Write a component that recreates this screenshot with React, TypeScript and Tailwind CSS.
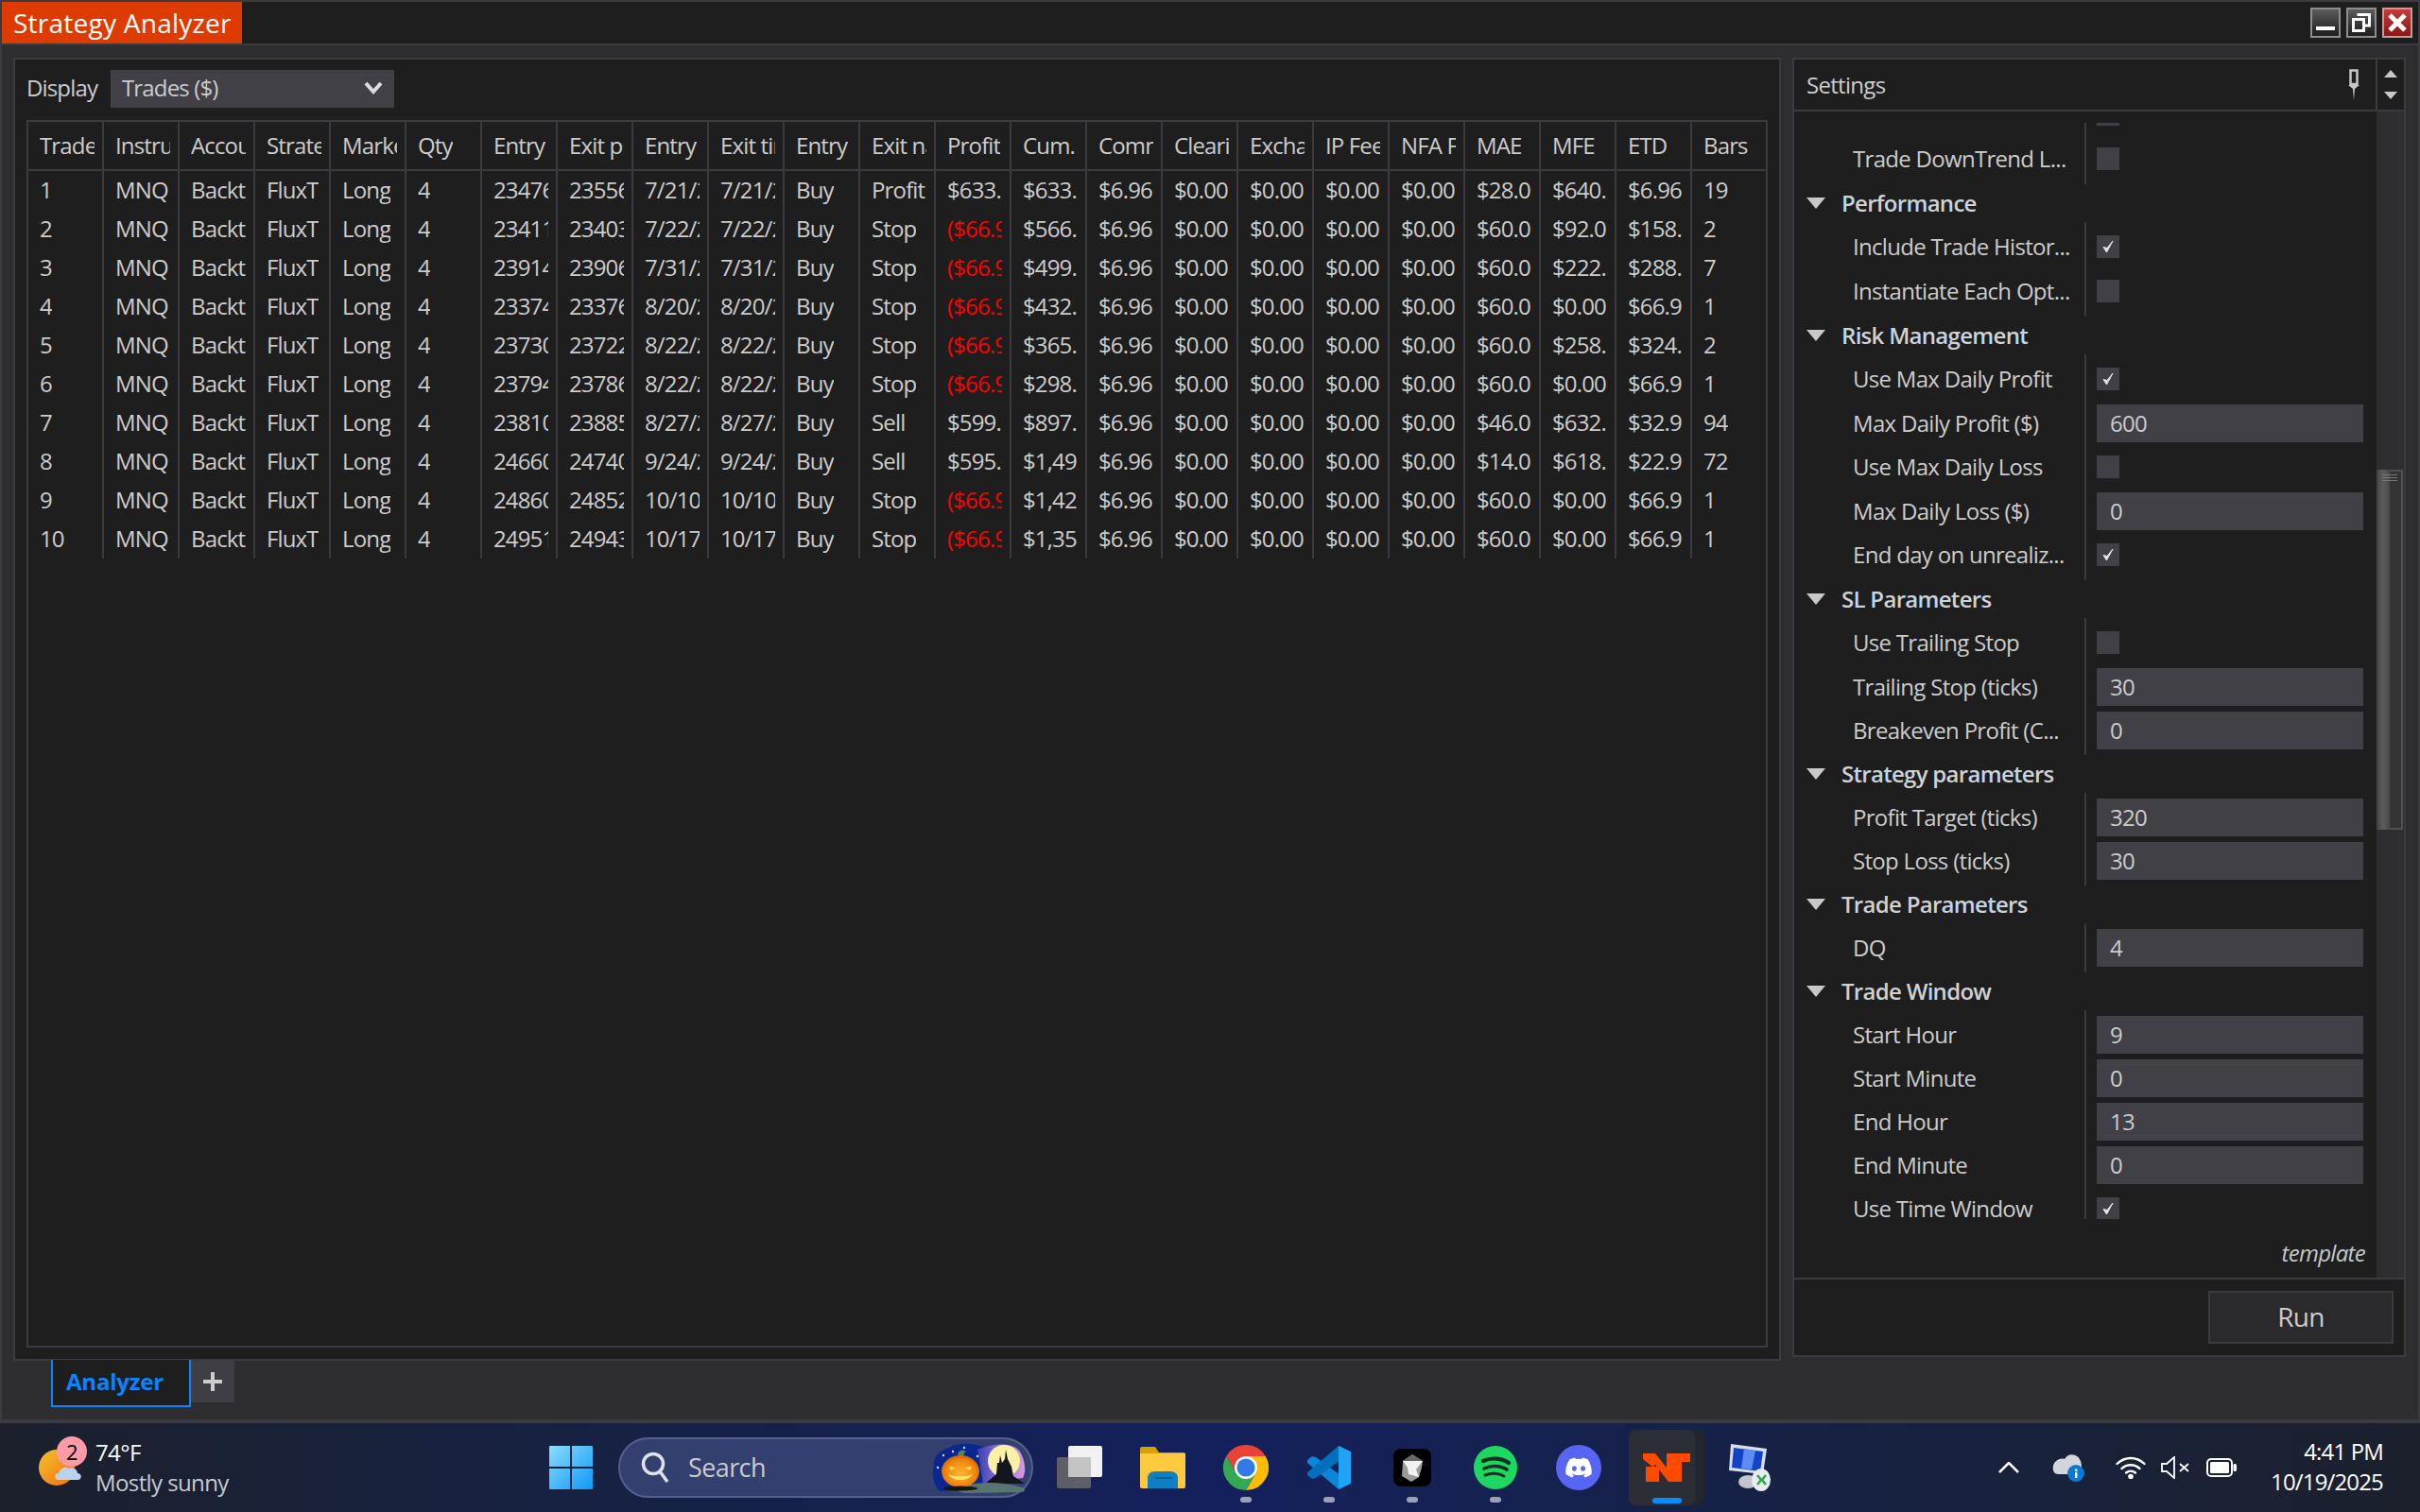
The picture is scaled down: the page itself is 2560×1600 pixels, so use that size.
import { FaDiscord } from 'react-icons/fa6'

const columns = [
  'Trade', 'Instrument', 'Account', 'Strategy', 'Market pos.', 'Qty', 'Entry price', 'Exit price',
  'Entry time', 'Exit time', 'Entry name', 'Exit name', 'Profit', 'Cum. net profit', 'Commission',
  'Clearing Fee', 'Exchange Fee', 'IP Fee', 'NFA Fee', 'MAE', 'MFE', 'ETD', 'Bars',
]

const trades: Array<Array<string>> = [
  ['1', '23476.50', '23556.50', '7/21/2025', '7/21/2025', 'Profit target', '$633.04', '$633.04', '$28.00', '$640.00', '$6.96', '19'],
  ['2', '23411.25', '23403.75', '7/22/2025', '7/22/2025', 'Stop', '($66.96)', '$566.08', '$60.00', '$92.00', '$158.96', '2'],
  ['3', '23914.00', '23906.50', '7/31/2025', '7/31/2025', 'Stop', '($66.96)', '$499.12', '$60.00', '$222.00', '$288.96', '7'],
  ['4', '23374.00', '23376.50', '8/20/2025', '8/20/2025', 'Stop', '($66.96)', '$432.16', '$60.00', '$0.00', '$66.96', '1'],
  ['5', '23730.00', '23722.50', '8/22/2025', '8/22/2025', 'Stop', '($66.96)', '$365.20', '$60.00', '$258.00', '$324.96', '2'],
  ['6', '23794.00', '23786.50', '8/22/2025', '8/22/2025', 'Stop', '($66.96)', '$298.24', '$60.00', '$0.00', '$66.96', '1'],
  ['7', '23810.50', '23885.50', '8/27/2025', '8/27/2025', 'Sell', '$599.04', '$897.28', '$46.00', '$632.00', '$32.96', '94'],
  ['8', '24660.00', '24740.00', '9/24/2025', '9/24/2025', 'Sell', '$595.04', '$1,492.32', '$14.00', '$618.00', '$22.96', '72'],
  ['9', '24860.00', '24852.50', '10/10/2025', '10/10/2025', 'Stop', '($66.96)', '$1,425.36', '$60.00', '$0.00', '$66.96', '1'],
  ['10', '24951.25', '24943.75', '10/17/2025', '10/17/2025', 'Stop', '($66.96)', '$1,358.40', '$60.00', '$0.00', '$66.96', '1'],
]

function tradeCells(t: string[]) {
  return [
    t[0], 'MNQ 12-25', 'Backtest', 'FluxT', 'Long', '4', t[1], t[2], t[3], t[4], 'Buy', t[5], t[6], t[7],
    '$6.96', '$0.00', '$0.00', '$0.00', '$0.00', t[8], t[9], t[10], t[11],
  ]
}

type SettingRow = { label: string; value?: string; check?: boolean }
type SettingGroup = { name?: string; rows: SettingRow[] }

const settingGroups: SettingGroup[] = [
  { rows: [{ label: '', check: false }, { label: 'Trade DownTrend L...', check: false }] },
  {
    name: 'Performance',
    rows: [
      { label: 'Include Trade Histor...', check: true },
      { label: 'Instantiate Each Opt...', check: false },
    ],
  },
  {
    name: 'Risk Management',
    rows: [
      { label: 'Use Max Daily Profit', check: true },
      { label: 'Max Daily Profit ($)', value: '600' },
      { label: 'Use Max Daily Loss', check: false },
      { label: 'Max Daily Loss ($)', value: '0' },
      { label: 'End day on unrealiz...', check: true },
    ],
  },
  {
    name: 'SL Parameters',
    rows: [
      { label: 'Use Trailing Stop', check: false },
      { label: 'Trailing Stop (ticks)', value: '30' },
      { label: 'Breakeven Profit (C...', value: '0' },
    ],
  },
  {
    name: 'Strategy parameters',
    rows: [
      { label: 'Profit Target (ticks)', value: '320' },
      { label: 'Stop Loss (ticks)', value: '30' },
    ],
  },
  { name: 'Trade Parameters', rows: [{ label: 'DQ', value: '4' }] },
  {
    name: 'Trade Window',
    rows: [
      { label: 'Start Hour', value: '9' },
      { label: 'Start Minute', value: '0' },
      { label: 'End Hour', value: '13' },
      { label: 'End Minute', value: '0' },
      { label: 'Use Time Window', check: true },
    ],
  },
]

function rowHeight(row: SettingRow) {
  return row.value !== undefined ? 'h-[46px] pb-px' : 'h-[47px] pb-px'
}

function SettingValue({ row }: { row: SettingRow }) {
  if (row.value !== undefined) {
    return (
      <div className="flex h-[46px] items-center">
        <div className="flex h-10 w-[282px] items-center bg-[#404046] pl-3.5">{row.value}</div>
      </div>
    )
  }
  return (
    <div className="flex h-[47px] items-center pb-px">
      <div className="flex h-6 w-6 items-center justify-center bg-[#404046]">
        {row.check ? (
          <svg width="14" height="16" viewBox="0 0 14 16">
            <path d="M2 8.5 L5.5 14 L12 2 L6 9.5 Z" fill="#e4e4e4" stroke="#e4e4e4" strokeWidth="1" />
          </svg>
        ) : null}
      </div>
    </div>
  )
}

function SettingsGrid() {
  return (
    <div className="-mt-[35px]">
      {settingGroups.map((group, i) => (
        <div key={i}>
          {group.name ? (
            <div className="flex h-10 items-center pb-px pl-[13px] font-semibold text-[#cdd2d8]">
              <svg width="20" height="12" viewBox="0 0 20 12" className="mr-[17px]">
                <polygon points="0,0 20,0 10,12" fill="#c8c8c8" />
              </svg>
              {group.name}
            </div>
          ) : null}
          <div className="flex">
            <div className="w-[309px] border-r-2 border-[#3a3a40] py-[3px] pl-[62px]">
              {group.rows.map((row, j) => (
                <div key={j} className={`flex items-center whitespace-nowrap ${rowHeight(row)}`}>
                  {row.label}
                </div>
              ))}
            </div>
            <div className="py-[3px] pl-[11px]">
              {group.rows.map((row, j) => (
                <SettingValue key={j} row={row} />
              ))}
            </div>
          </div>
        </div>
      ))}
    </div>
  )
}

function TradesGrid() {
  return (
    <div className="ml-3 mt-[13px] h-[1299px] w-[1842px] border-2 border-[#3a3a40]">
      <div className="grid grid-cols-[repeat(22,80px)_78px] border-b-2 border-[#3a3a40]">
        {columns.map((col, i) => (
          <div key={col} className={`flex h-[50px] items-center ${i < 22 ? 'border-r-2 border-[#3a3a40]' : ''}`}>
            <div className="ml-3 mr-2 overflow-hidden whitespace-nowrap">{col}</div>
          </div>
        ))}
      </div>
      {trades.map((trade) => (
        <div key={trade[0]} className="grid grid-cols-[repeat(22,80px)_78px]">
          {tradeCells(trade).map((cell, i) => (
            <div key={i} className={`flex h-[41px] items-center pb-[2px] ${i < 22 ? 'border-r-2 border-[#3a3a40]' : ''}`}>
              <div className={`ml-3 mr-2 overflow-hidden whitespace-nowrap ${cell.startsWith('(') ? 'text-[#ff0000]' : ''}`}>
                {cell}
              </div>
            </div>
          ))}
        </div>
      ))}
    </div>
  )
}

function WindowButton({ close, children }: { close?: boolean; children: React.ReactNode }) {
  return (
    <div
      className={`flex h-8 w-8 items-center justify-center border-2 ${
        close
          ? 'border-[#c99] bg-gradient-to-b from-[#c83a3a] to-[#8e1414]'
          : 'border-[#8e8e8e] bg-gradient-to-b from-[#5c5c5c] to-[#1e1e1e]'
      }`}
    >
      {children}
    </div>
  )
}

function Doodle() {
  return (
    <svg width="105" height="55" viewBox="0 0 105 55">
      <defs>
        <linearGradient id="dusk" x1="0" x2="1" y1="0" y2="0">
          <stop offset="0" stopColor="#3a3fb0" />
          <stop offset="0.6" stopColor="#a583e0" />
          <stop offset="1" stopColor="#d59ae0" />
        </linearGradient>
        <radialGradient id="pump" cx="0.5" cy="0.55" r="0.6">
          <stop offset="0" stopColor="#ffb52e" />
          <stop offset="0.7" stopColor="#f0820c" />
          <stop offset="1" stopColor="#b85a05" />
        </radialGradient>
      </defs>
      <path d="M4 22 C6 10 16 8 24 4 C34 0 50 2 58 6 L58 50 L10 52 C2 44 2 32 4 22 Z" fill="#0a2790" />
      <path d="M50 8 C62 2 90 -2 96 12 C100 20 102 30 98 38 L56 44 Z" fill="url(#dusk)" />
      <circle cx="78" cy="20" r="17" fill="#fbf0a4" />
      <polygon points="58,44 70,34 71,22 73,22 74,14 76,22 79,18 80,8 82,18 86,26 88,36 100,44" fill="#15151f" />
      <path d="M30 50 C40 42 70 40 98 48 C102 50 100 54 92 53 L40 54 C32 54 28 52 30 50 Z" fill="#57766f" />
      <circle cx="14" cy="14" r="1.2" fill="#cfe0ff" />
      <circle cx="24" cy="10" r="1.2" fill="#cfe0ff" />
      <circle cx="36" cy="6" r="1.2" fill="#cfe0ff" />
      <circle cx="50" cy="15" r="1.2" fill="#cfe0ff" />
      <circle cx="8" cy="27" r="1.2" fill="#cfe0ff" />
      <path d="M30 16 C28 10 32 8 36 9 L38 11 C35 11 35 14 36 17 Z" fill="#4f8a5a" />
      <ellipse cx="32" cy="31" rx="20" ry="17" fill="url(#pump)" />
      <path d="M20 26 L27 27 L22 30 Z M44 26 L37 27 L42 30 Z" fill="#ffe46a" />
      <path d="M19 34 C24 42 40 42 45 34 C40 37 24 37 19 34 Z" fill="#ffe46a" />
      <ellipse cx="32" cy="49" rx="18" ry="2.5" fill="#16160f" />
    </svg>
  )
}

function TaskSlot({ children, dot, width = 'w-[88px]' }: { children: React.ReactNode; dot?: boolean; width?: string }) {
  return (
    <div className={`relative flex h-[94px] items-center justify-center ${width}`}>
      {children}
      {dot ? <div className="absolute bottom-[10px] h-1.5 w-3 rounded-full bg-[#9aa0b8]" /> : null}
    </div>
  )
}

export default function App() {
  return (
    <div className="flex h-[1600px] w-[2560px] flex-col overflow-hidden bg-[#2e2e30] font-['Open_Sans',sans-serif] text-[24px] leading-[32px] tracking-[-0.85px] text-[#cccccc]">
      <div className="flex h-[1506px] flex-col border-x-2 border-b-4 border-t-2 border-[#3a3a40]">
        <div className="flex h-[46px] shrink-0 items-center justify-between border-b-2 border-[#3a3a40] bg-[#1e1e1e] pr-1.5">
          <div className="flex h-11 w-[254px] items-center bg-[#de3b00] pl-3 text-[28px] tracking-[0.25px] text-white">Strategy Analyzer</div>
          <div className="flex gap-1.5">
            <WindowButton>
              <div className="mt-3 h-1 w-5 bg-white" />
            </WindowButton>
            <WindowButton>
              <svg width="20" height="20" viewBox="0 0 20 20" fill="none" stroke="#fff" strokeWidth="3">
                <rect x="1.5" y="6.5" width="11" height="12" />
                <path d="M7 3 V1.5 H18.5 V13 H14" />
              </svg>
            </WindowButton>
            <WindowButton close>
              <svg width="20" height="20" viewBox="0 0 20 20" stroke="#fff" strokeWidth="5">
                <path d="M2 2 L18 18 M18 2 L2 18" />
              </svg>
            </WindowButton>
          </div>
        </div>

        <div className="flex items-start gap-3 pl-3 pt-[13px]">
          <div className="h-[1379px] w-[1870px] border-2 border-[#3a3a40] bg-[#1e1e1e]">
            <div className="flex items-center pl-3 pt-[11px]">
              <span className="w-[89px] pb-[2px]">Display</span>
              <div className="flex h-10 w-[300px] items-center justify-between bg-[#404046] pb-[2px] pl-3 pr-3">
                Trades ($)
                <svg width="20" height="14" viewBox="0 0 20 14" fill="none" stroke="#dddddd" strokeWidth="4">
                  <path d="M2 2 L10 11 L18 2" />
                </svg>
              </div>
            </div>
            <TradesGrid />
          </div>

          <div className="h-[1375px] w-[649px] border-2 border-[#3a3a40] bg-[#1e1e1e] tracking-[-0.7px]">
            <div className="flex h-[55px] border-b-2 border-[#3a3a40]">
              <div className="flex flex-1 items-center justify-between border-r-2 border-[#3a3a40] pl-[13px] pr-4">
                <span>Settings</span>
                <svg width="14" height="34" viewBox="0 0 14 34" fill="none">
                  <path d="M3.5 1.5 H10.5 V16 H3.5 Z" stroke="#c8c8c8" strokeWidth="2.5" />
                  <path d="M1 17 H13 L8 21 L7 33 L6 21 Z" fill="#c8c8c8" />
                </svg>
              </div>
              <div className="flex w-[28px] flex-col items-center justify-between py-[11px]">
                <svg width="14" height="8" viewBox="0 0 14 8"><polygon points="7,0 14,8 0,8" fill="#c8c8c8" /></svg>
                <svg width="14" height="8" viewBox="0 0 14 8"><polygon points="0,0 14,0 7,8" fill="#c8c8c8" /></svg>
              </div>
            </div>
            <div className="flex h-[1234px]">
              <div className="w-[616px] pt-3">
                <div className="h-[1160px] overflow-hidden">
                  <SettingsGrid />
                </div>
                <div className="pr-3 pt-5 text-right italic text-[#c4c8cc]">template</div>
              </div>
              <div className="flex-1 bg-[#2e2e30] pt-[379px]">
                <div className="relative flex h-[381px] w-[28px]">
                  <div className="w-[14px] bg-gradient-to-r from-[#444444] via-[#5c5c5c] to-[#484848]" />
                  <div className="w-[14px] border-y-2 border-r-2 border-[#505056] bg-[#333335]" />
                  <div className="absolute left-1.5 top-[5px] flex w-4 flex-col gap-[2px]">
                    <div className="h-px bg-[#77777c]" />
                    <div className="h-px bg-[#77777c]" />
                    <div className="h-px bg-[#77777c]" />
                  </div>
                </div>
              </div>
            </div>
            <div className="flex h-[82px] justify-end border-t-2 border-[#3a3a40] pr-[11px] pt-3">
              <div className="flex h-14 w-[196px] items-center justify-center border-2 border-[#3a3a40] bg-[#2a2a2c] pb-[2px] text-[28px]">Run</div>
            </div>
          </div>
        </div>

        <div className="flex items-start pl-[52px]">
          <div className="-mt-px flex h-[50px] w-[148px] items-center border-x-2 border-b-2 border-[#0a84ff] bg-[#1e1e1e] pb-[3px] pl-3.5 font-bold tracking-[-0.2px] text-[#0a84ff]">Analyzer</div>
          <div className="flex h-11 w-[46px] items-center justify-center bg-[#3e3e44]">
            <svg width="22" height="22" viewBox="0 0 22 22" stroke="#cccccc" strokeWidth="4"><path d="M11 1 V21 M1 11 H21" /></svg>
          </div>
        </div>
      </div>

      <div className="flex h-[94px] items-center bg-gradient-to-r from-[#1b202c] via-[#14205c] to-[#1b202c] tracking-[-0.6px] text-[#c8cad2]">
        <div className="flex w-[581px] items-center pl-[41px]">
          <div className="relative mr-[22px] h-[38px] w-[38px] rounded-full bg-gradient-to-br from-[#f2c12e] to-[#f06c10]">
            <div className="absolute -top-[14px] left-[19px] flex h-8 w-8 items-center justify-center rounded-full bg-[#ff9aa8] text-[22px] text-black">2</div>
            <svg className="absolute left-4 top-[17px]" width="30" height="16" viewBox="0 0 30 16">
              <path d="M5 15 C0 15 0 8 5 8 C6 3 12 0 16 3 C20 1 25 4 25 8 C30 8 30 15 25 15 Z" fill="#b9d3ee" />
            </svg>
          </div>
          <div className="leading-[32px]">
            <div className="text-white">74°F</div>
            <div>Mostly sunny</div>
          </div>
        </div>
        <svg width="46" height="46" viewBox="0 0 46 46">
          <defs>
            <linearGradient id="win" x1="0" y1="0" x2="1" y2="1">
              <stop offset="0" stopColor="#8bdcfc" />
              <stop offset="1" stopColor="#1098f7" />
            </linearGradient>
          </defs>
          <path d="M0 1 Q0 0 1 0 H22 V22 H0 Z M24 0 H45 Q46 0 46 1 V22 H24 Z M0 24 H22 V46 H1 Q0 46 0 45 Z M24 24 H46 V45 Q46 46 45 46 H24 Z" fill="url(#win)" />
        </svg>
        <div className="ml-[27px] flex h-16 w-[439px] items-center rounded-full border-2 border-[#565f8e] bg-[#333f6e] pl-[22px] pr-[2px]">
          <svg width="30" height="34" viewBox="0 0 30 34" fill="none" stroke="#dfe2ea" strokeWidth="3.5">
            <circle cx="13" cy="13" r="10.5" />
            <path d="M20 21 L28 32" />
          </svg>
          <span className="ml-[20px] text-[27px]">Search</span>
          <div className="ml-auto flex">
            <Doodle />
          </div>
        </div>

        <div className="ml-[5px] flex">
          <TaskSlot>
            <svg width="48" height="46" viewBox="0 0 48 46">
              <rect x="12" y="0" width="36" height="33" rx="2" fill="#f2f2f2" />
              <rect x="0" y="12" width="36" height="33" rx="2" fill="#6a6a6a" fillOpacity="0.85" />
              <rect x="12" y="12" width="24" height="21" fill="#c4c4c4" />
            </svg>
          </TaskSlot>
          <TaskSlot>
            <svg width="48" height="44" viewBox="0 0 48 44">
              <path d="M0 2 Q0 0 2 0 H16 L20 6 H46 Q48 6 48 8 V14 H0 Z" fill="#d8a000" />
              <path d="M0 7 H48 V42 Q48 44 46 44 H2 Q0 44 0 42 Z" fill="#fdc93f" />
              <path d="M8 44 V34 Q8 26 16 26 H32 Q40 26 40 34 V44 Z" fill="#0f7fc4" />
              <rect x="16" y="32" width="18" height="2" fill="#0b5f99" />
            </svg>
          </TaskSlot>
          <TaskSlot dot>
            <svg width="48" height="48" viewBox="0 0 48 48">
              <path d="M3.2 12 A24 24 0 0 1 44.8 12 L24 12 L13.6 30 Z" fill="#ea4335" />
              <path d="M44.8 12 A24 24 0 0 1 24 48 L34.4 30 L24 12 Z" fill="#fbbc04" />
              <path d="M24 48 A24 24 0 0 1 3.2 12 L13.6 30 L34.4 30 Z" fill="#34a853" />
              <circle cx="24" cy="24" r="12" fill="#fff" />
              <circle cx="24" cy="24" r="9.6" fill="#2f7be8" />
            </svg>
          </TaskSlot>
          <TaskSlot dot>
            <svg width="48" height="48" viewBox="0 0 48 48">
              <polygon points="34,47 40,44 40,35 10,13 6,12 1,16 1,19" fill="#0d86d8" />
              <polygon points="34,1 40,4 40,13 10,35 6,36 1,32 1,29" fill="#0070bd" />
              <polygon points="34,1 47,7 47,41 34,47 34,1" fill="#1fa3f5" />
            </svg>
          </TaskSlot>
          <TaskSlot dot>
            <svg width="40" height="40" viewBox="0 0 40 40">
              <rect width="40" height="40" rx="8" fill="#000" />
              <polygon points="20,6 31,13 30,20 27,30 19,35 9,29 10,13" fill="#9a9a9a" />
              <polygon points="10,13 31,13 24,22 27,30 16,27 15,20" fill="#f2f2f2" />
              <polygon points="20,6 31,13 10,13" fill="#686868" />
            </svg>
          </TaskSlot>
          <TaskSlot dot>
            <svg width="46" height="46" viewBox="0 0 46 46" fill="none" strokeLinecap="round">
              <circle cx="23" cy="23" r="23" fill="#1ed760" />
              <path d="M10 16 C18 12 30 13 37 18" stroke="#14301f" strokeWidth="4.2" />
              <path d="M11 24 C19 20 29 21 35 25" stroke="#14301f" strokeWidth="3.6" />
              <path d="M12 31 C19 28 27 29 32 32" stroke="#14301f" strokeWidth="3" />
            </svg>
          </TaskSlot>
          <TaskSlot>
            <div className="flex h-12 w-12 items-center justify-center rounded-full bg-[#5865f2] text-white">
              <FaDiscord size={30} />
            </div>
          </TaskSlot>
          <TaskSlot width="w-[98px]">
            <div className="relative flex h-20 w-20 items-center justify-center rounded-lg bg-[#24262e]">
              <div className="absolute inset-y-0 left-0 w-[70px] rounded-lg bg-[#2c2e36]" />
              <svg className="relative" width="50" height="30" viewBox="0 0 50 30">
                <path d="M0 0 H13 L25 15 V0 H50 V9 H41 V30 H27 L13 12 V11 L11 14 H17 V30 H3 V14 H10 L0 6 Z" fill="#ff4a00" />
              </svg>
              <div className="absolute bottom-0.5 h-1.5 w-[31px] rounded-full bg-[#0a8cff]" />
            </div>
          </TaskSlot>
          <TaskSlot width="w-[78px]">
            <svg width="48" height="50" viewBox="0 0 48 50">
              <polygon points="4,0 42,5 38,32 2,28" fill="#d8dde6" />
              <polygon points="7,4 38,8 35,29 5,25" fill="#1242c8" />
              <polygon points="18,5 30,7 26,27 15,26" fill="#5d8df0" />
              <ellipse cx="22" cy="40" rx="10" ry="7" fill="#c2c6cc" />
              <ellipse cx="36" cy="38" rx="10" ry="12" fill="#e8ecef" />
              <path d="M32 33 L36 38 L32 43 M41 33 L37 38 L41 43" fill="none" stroke="#2aa84a" strokeWidth="2.5" />
            </svg>
          </TaskSlot>
        </div>

        <div className="ml-auto flex items-center pr-[39px]">
          <svg width="22" height="12" viewBox="0 0 22 12" fill="none" stroke="#ffffff" strokeWidth="2.5"><path d="M1 11 L11 1 L21 11" /></svg>
          <svg className="ml-[34px]" width="36" height="30" viewBox="0 0 36 30">
            <path d="M2 18 C0 8 10 4 14 6 C18 -2 32 0 32 14 C32 20 28 22 22 22 H8 C5 22 3 21 2 18 Z" fill="#d4d6dc" />
            <circle cx="26" cy="21" r="9" fill="#0a78d4" />
            <rect x="25" y="20" width="2.4" height="6" fill="#fff" />
            <rect x="25" y="16.5" width="2.4" height="2.4" fill="#fff" />
          </svg>
          <svg className="ml-8" width="32" height="24" viewBox="0 0 32 24" fill="none" stroke="#ffffff" strokeWidth="2.4" strokeLinecap="round">
            <path d="M1.5 8 C10 0 22 0 30.5 8" />
            <path d="M6.5 13 C12 8 20 8 25.5 13" />
            <path d="M11 17.5 C14 15 18 15 21 17.5" />
            <circle cx="16" cy="21.5" r="1.6" fill="#fff" />
          </svg>
          <svg className="ml-4" width="30" height="24" viewBox="0 0 30 24" fill="none" stroke="#ffffff" strokeWidth="1.8">
            <path d="M1 8 H6 L14 1 V23 L6 16 H1 Z" />
            <path d="M20 8 L29 16 M29 8 L20 16" />
          </svg>
          <svg className="ml-[18px]" width="32" height="20" viewBox="0 0 32 20">
            <rect x="1" y="1" width="26" height="18" rx="4" fill="none" stroke="#ffffff" strokeWidth="2" />
            <rect x="4" y="4" width="20" height="12" rx="1.5" fill="#ffffff" />
            <rect x="28.5" y="6" width="3.5" height="8" rx="1.5" fill="#ffffff" />
          </svg>
          <div className="ml-9 pb-[3px] text-right text-[24px] leading-[32px] tracking-[-0.85px] text-white">
            <div>4:41 PM</div>
            <div>10/19/2025</div>
          </div>
        </div>
      </div>
    </div>
  )
}
